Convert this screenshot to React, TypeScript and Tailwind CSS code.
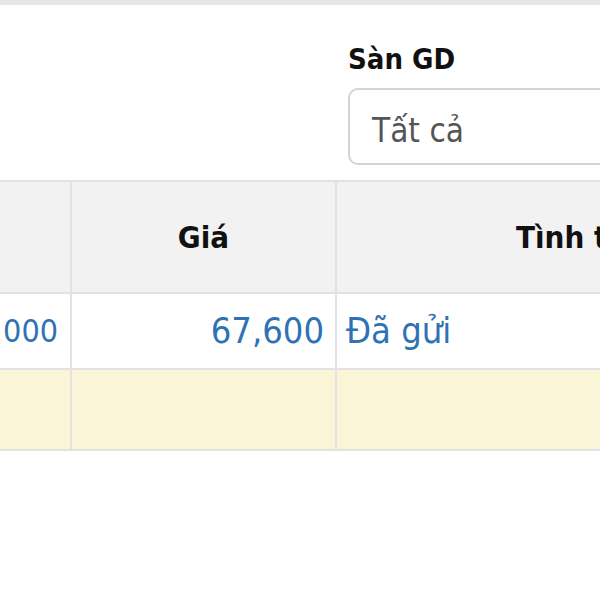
export default function App() {
  return (
    <div className="w-[600px] h-[600px] overflow-hidden bg-white font-['DejaVu_Sans_Condensed','Liberation_Sans',Arial,sans-serif]">
      <div className="h-[5px] bg-[#e6e6e6]" />

      <div className="flex justify-end pt-[37px]">
        <div className="w-[252px] shrink-0">
          <div className="text-[29px] leading-[34px] font-bold text-[#111]">Sàn GD</div>
          <div className="mt-[12px] w-[300px] h-[77px] border-2 border-[#d4d4d4] rounded-[10px] flex items-center pl-[22px] pt-[8px] text-[33px] text-[#555]">
            Tất cả
          </div>
        </div>
      </div>

      <div className="mt-[15px] border-t-2 border-[#e2e2e2] overflow-hidden">
        <table className="border-collapse table-fixed w-[900px] text-[36px]">
          <colgroup>
            <col className="w-[71px]" />
            <col className="w-[265px]" />
            <col className="w-[564px]" />
          </colgroup>
          <thead>
            <tr className="h-[111px] bg-[#f2f2f2] text-[31px]">
              <th className="border-r-2 border-[#e2e2e2]" />
              <th className="border-x-2 border-[#e2e2e2] font-bold text-[#111] text-center">Giá</th>
              <th className="border-l-2 border-[#e2e2e2] font-bold text-[#111] text-left pl-[179px]">Tình trạng</th>
            </tr>
          </thead>
          <tbody>
            <tr className="h-[76px] text-[#2f72b3] border-t-2 border-[#e2e2e2]">
              <td className="border-r-2 border-[#e2e2e2] text-right pr-[12px] text-[32px] overflow-hidden whitespace-nowrap">000</td>
              <td className="border-x-2 border-[#e2e2e2] text-right pr-[11px]">67,600</td>
              <td className="border-l-2 border-[#e2e2e2] text-left pl-[9px]">Đã gửi</td>
            </tr>
            <tr className="h-[81px] bg-[#fbf5d8] border-y-2 border-[#e2e2e2]">
              <td className="border-r-2 border-[#e2e2e2]" />
              <td className="border-x-2 border-[#e2e2e2]" />
              <td className="border-l-2 border-[#e2e2e2]" />
            </tr>
          </tbody>
        </table>
      </div>
    </div>
  );
}
